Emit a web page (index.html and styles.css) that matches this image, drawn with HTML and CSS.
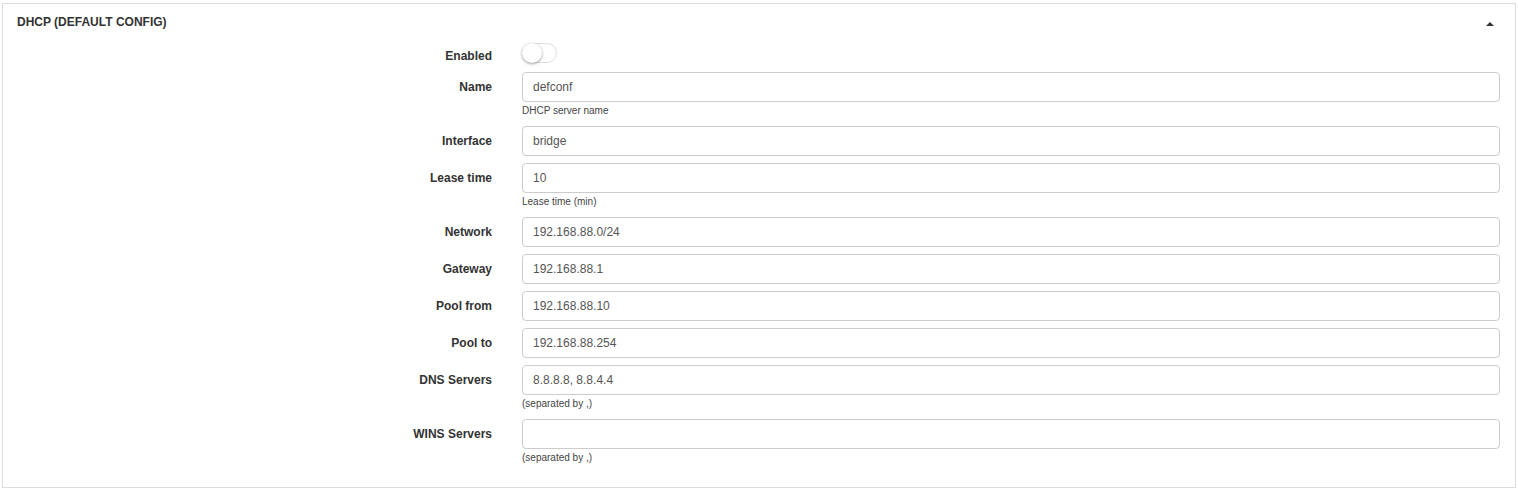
FILE: index.html
```html
<!DOCTYPE html>
<html>
<head>
<meta charset="utf-8">
<link rel="stylesheet" href="styles.css">
</head>
<body>
<div class="page">
  <div class="panel">
    <div class="panel-head">
      <span class="panel-title">DHCP (DEFAULT CONFIG)</span>
      <span class="caret"></span>
    </div>
    <div class="panel-body">
      <div class="row row-toggle">
        <label class="lbl lbl-toggle">Enabled</label>
        <div class="ctl"><span class="switch"><span class="knob"></span></span></div>
      </div>
      <div class="row">
        <label class="lbl">Name</label>
        <div class="ctl"><div class="input">defconf</div><div class="help">DHCP server name</div></div>
      </div>
      <div class="row">
        <label class="lbl">Interface</label>
        <div class="ctl"><div class="input">bridge</div></div>
      </div>
      <div class="row">
        <label class="lbl">Lease time</label>
        <div class="ctl"><div class="input">10</div><div class="help">Lease time (min)</div></div>
      </div>
      <div class="row">
        <label class="lbl">Network</label>
        <div class="ctl"><div class="input">192.168.88.0/24</div></div>
      </div>
      <div class="row">
        <label class="lbl">Gateway</label>
        <div class="ctl"><div class="input">192.168.88.1</div></div>
      </div>
      <div class="row">
        <label class="lbl">Pool from</label>
        <div class="ctl"><div class="input">192.168.88.10</div></div>
      </div>
      <div class="row">
        <label class="lbl">Pool to</label>
        <div class="ctl"><div class="input">192.168.88.254</div></div>
      </div>
      <div class="row">
        <label class="lbl">DNS Servers</label>
        <div class="ctl"><div class="input">8.8.8.8, 8.8.4.4</div><div class="help">(separated by ,)</div></div>
      </div>
      <div class="row last">
        <label class="lbl">WINS Servers</label>
        <div class="ctl"><div class="input"></div><div class="help">(separated by ,)</div></div>
      </div>
    </div>
  </div>
</div>
</body>
</html>
```
FILE: styles.css
```css
* { box-sizing: border-box; }
html, body { margin: 0; padding: 0; background: #fff; }
body {
  font-family: "Liberation Sans", Arial, sans-serif;
  color: #333;
}
.page { padding: 3px 2px 2px 2px; }
.panel {
  border: 1px solid #ddd;
  background: #fff;
  height: 485px;
}
.panel-head {
  height: 36px;
  padding: 0 21px 0 14px;
  display: flex;
  align-items: center;
  justify-content: space-between;
}
.panel-title {
  font-size: 12px;
  font-weight: bold;
  color: #333;
  line-height: 36px;
}
.caret {
  width: 0;
  height: 0;
  border-left: 4px solid transparent;
  border-right: 4px solid transparent;
  border-bottom: 4px solid #333;
  margin-top: 3px;
}
.panel-body {
  padding: 0 15px 21px 0;
}
.row {
  display: grid;
  grid-template-columns: 489px 1fr;
  column-gap: 30px;
  margin-bottom: 7px;
}
.row.last { margin-bottom: 0; }
.row-toggle { height: 25px; }
.lbl {
  font-size: 12px;
  font-weight: bold;
  text-align: right;
  line-height: 30px;
  color: #333;
}
.lbl-toggle {
  line-height: 14px;
  padding-top: 9px;
}
.input {
  height: 30px;
  border: 1px solid #ccc;
  border-radius: 4px;
  padding: 0 10px;
  font-size: 12px;
  line-height: 28px;
  color: #555;
  background: #fff;
}
.help {
  font-size: 10px;
  line-height: 12px;
  padding: 3px 0 2px 0;
  color: #444;
  height: 17px;
}
.switch {
  display: block;
  position: relative;
  width: 35px;
  height: 20px;
  margin-top: 3px;
  border: 1px solid #dfdfdf;
  border-radius: 10px;
  background: #fff;
}
.knob {
  position: absolute;
  left: -1px;
  top: -1px;
  width: 20px;
  height: 20px;
  border-radius: 50%;
  background: #fff;
  box-shadow: 0 1px 3px rgba(0, 0, 0, 0.4);
}
```
